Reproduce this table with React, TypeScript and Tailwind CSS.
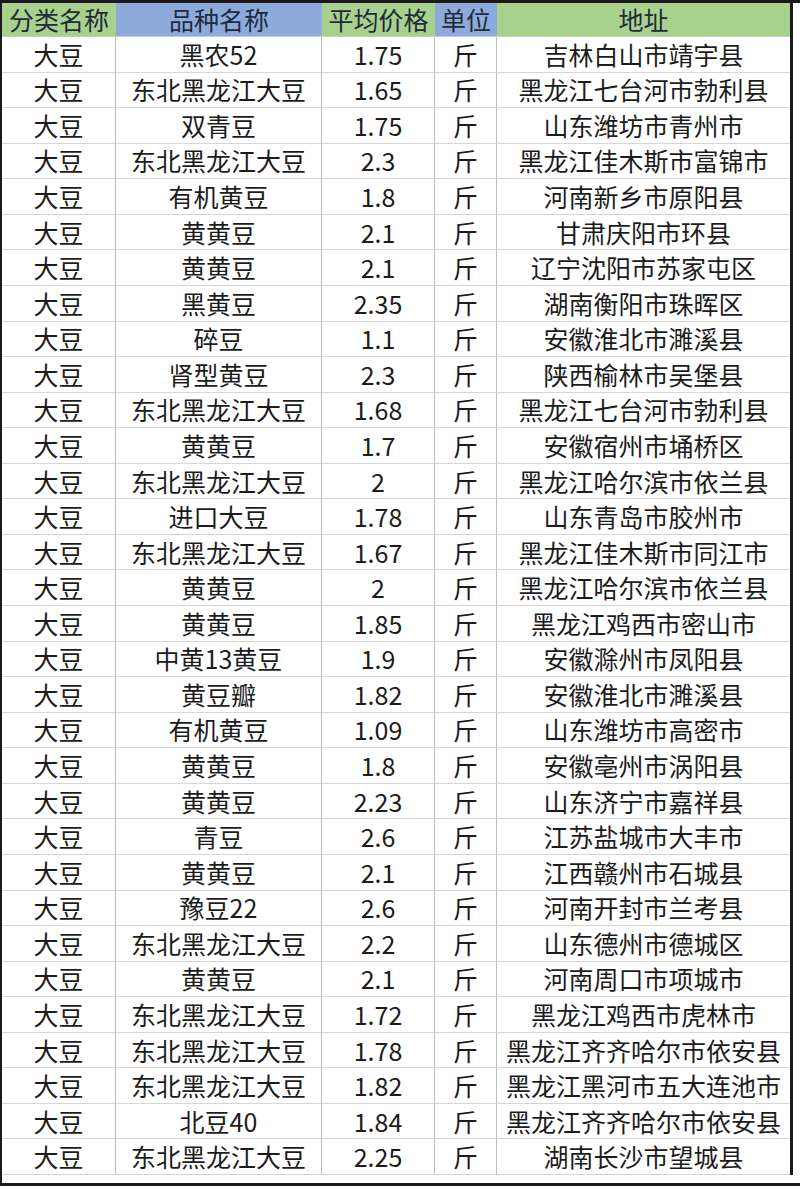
import React from 'react'

type Row = [string, string, string, string]

// 品种名称, 平均价格, 单位, 地址 (分类名称 is always 大豆)
const rows: Row[] = [
  ['黑农52', '1.75', '斤', '吉林白山市靖宇县'],
  ['东北黑龙江大豆', '1.65', '斤', '黑龙江七台河市勃利县'],
  ['双青豆', '1.75', '斤', '山东潍坊市青州市'],
  ['东北黑龙江大豆', '2.3', '斤', '黑龙江佳木斯市富锦市'],
  ['有机黄豆', '1.8', '斤', '河南新乡市原阳县'],
  ['黄黄豆', '2.1', '斤', '甘肃庆阳市环县'],
  ['黄黄豆', '2.1', '斤', '辽宁沈阳市苏家屯区'],
  ['黑黄豆', '2.35', '斤', '湖南衡阳市珠晖区'],
  ['碎豆', '1.1', '斤', '安徽淮北市濉溪县'],
  ['肾型黄豆', '2.3', '斤', '陕西榆林市吴堡县'],
  ['东北黑龙江大豆', '1.68', '斤', '黑龙江七台河市勃利县'],
  ['黄黄豆', '1.7', '斤', '安徽宿州市埇桥区'],
  ['东北黑龙江大豆', '2', '斤', '黑龙江哈尔滨市依兰县'],
  ['进口大豆', '1.78', '斤', '山东青岛市胶州市'],
  ['东北黑龙江大豆', '1.67', '斤', '黑龙江佳木斯市同江市'],
  ['黄黄豆', '2', '斤', '黑龙江哈尔滨市依兰县'],
  ['黄黄豆', '1.85', '斤', '黑龙江鸡西市密山市'],
  ['中黄13黄豆', '1.9', '斤', '安徽滁州市凤阳县'],
  ['黄豆瓣', '1.82', '斤', '安徽淮北市濉溪县'],
  ['有机黄豆', '1.09', '斤', '山东潍坊市高密市'],
  ['黄黄豆', '1.8', '斤', '安徽亳州市涡阳县'],
  ['黄黄豆', '2.23', '斤', '山东济宁市嘉祥县'],
  ['青豆', '2.6', '斤', '江苏盐城市大丰市'],
  ['黄黄豆', '2.1', '斤', '江西赣州市石城县'],
  ['豫豆22', '2.6', '斤', '河南开封市兰考县'],
  ['东北黑龙江大豆', '2.2', '斤', '山东德州市德城区'],
  ['黄黄豆', '2.1', '斤', '河南周口市项城市'],
  ['东北黑龙江大豆', '1.72', '斤', '黑龙江鸡西市虎林市'],
  ['东北黑龙江大豆', '1.78', '斤', '黑龙江齐齐哈尔市依安县'],
  ['东北黑龙江大豆', '1.82', '斤', '黑龙江黑河市五大连池市'],
  ['北豆40', '1.84', '斤', '黑龙江齐齐哈尔市依安县'],
  ['东北黑龙江大豆', '2.25', '斤', '湖南长沙市望城县'],
]

const headers: { label: string; bg: string }[] = [
  { label: '分类名称', bg: 'bg-[#a9d18e]' },
  { label: '品种名称', bg: 'bg-[#8eaadc]' },
  { label: '平均价格', bg: 'bg-[#a9d18e]' },
  { label: '单位', bg: 'bg-[#8eaadc]' },
  { label: '地址', bg: 'bg-[#a9d18e]' },
]

export default function App() {
  return (
    <div
      className="w-[800px] h-[1189px] bg-white flex flex-col overflow-hidden"
      style={{ fontFamily: '"Noto Sans CJK SC", "Noto Sans", sans-serif' }}
    >
      <div className="h-[3px] bg-[#1a1a1a]" />

      <div className="flex border-l-2 border-[#1a1a1a]">
        <div className="w-[791px] border-r-[3px] border-[#1a1a1a]">
          {/* Header */}
          <div className="grid grid-cols-[114px_206px_113px_62px_293px] h-[34px]">
            {headers.map(h => (
              <div
                key={h.label}
                className={`flex items-center justify-center text-[25px] leading-none text-[#1e2b3a] border-b border-[#c9c9c9] ${h.bg}`}
              >
                {h.label}
              </div>
            ))}
          </div>

          {/* Body */}
          {rows.map((r, i) => (
            <div key={i} className="grid grid-cols-[114px_206px_113px_62px_293px] h-[35.5625px]">
              {['大豆', ...r].map((v, j) => (
                <div
                  key={j}
                  className={`flex items-center justify-center whitespace-nowrap text-[25px] leading-none text-[#1c1c1c] border-b border-[#d6d6d6] ${j < 4 ? 'border-r border-r-[#bdbdbd]' : ''}`}
                >
                  {v}
                </div>
              ))}
            </div>
          ))}
        </div>
        <div className="flex-1" />
      </div>

      <div className="h-[8px] border-l-2 border-[#1a1a1a]" />
      <div className="h-[3px] bg-[#1a1a1a]" />
    </div>
  )
}
